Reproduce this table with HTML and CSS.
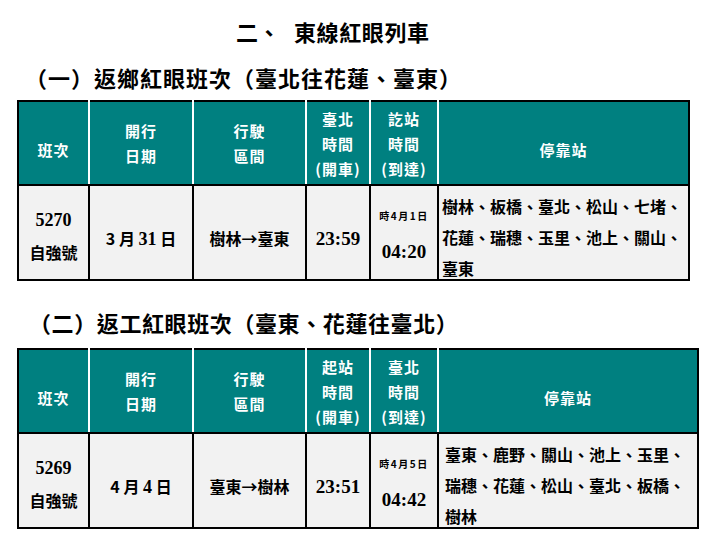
FILE: index.html
```html
<!DOCTYPE html>
<html lang="zh-Hant">
<head>
<meta charset="utf-8">
<link rel="stylesheet" href="styles.css">
</head>
<body>
<div class="page">
  <h1 class="title"><span>二、</span><span class="title-main">東線紅眼列車</span></h1>

  <h2 class="section">（一）返鄉紅眼班次（臺北往花蓮、臺東）</h2>
  <table class="sched sched-a">
    <colgroup>
      <col class="c1"><col class="c2"><col class="c3"><col class="c4"><col class="c5"><col class="c6">
    </colgroup>
    <thead>
      <tr>
        <th class="single">班次</th>
        <th>開行<br>日期</th>
        <th>行駛<br>區間</th>
        <th>臺北<br>時間<br>(開車)</th>
        <th>訖站<br>時間<br>(到達)</th>
        <th class="single">停靠站</th>
      </tr>
    </thead>
    <tbody>
      <tr>
        <td class="train"><span class="num">5270</span><br>自強號</td>
        <td class="date">3 月 <span class="num">31</span> 日</td>
        <td class="date">樹林→臺東</td>
        <td class="date"><span class="num time">23:59</span></td>
        <td class="arr"><span class="small">時4月1日</span><br><span class="num time">04:20</span></td>
        <td class="stops"><div class="stops-text">樹林、板橋、臺北、松山、七堵、花蓮、瑞穗、玉里、池上、關山、臺東</div></td>
      </tr>
    </tbody>
  </table>

  <h2 class="section section-b">（二）返工紅眼班次（臺東、花蓮往臺北）</h2>
  <table class="sched sched-b">
    <colgroup>
      <col class="c1"><col class="c2"><col class="c3"><col class="c4"><col class="c5"><col class="c6b">
    </colgroup>
    <thead>
      <tr>
        <th class="single">班次</th>
        <th>開行<br>日期</th>
        <th>行駛<br>區間</th>
        <th>起站<br>時間<br>(開車)</th>
        <th>臺北<br>時間<br>(到達)</th>
        <th class="single">停靠站</th>
      </tr>
    </thead>
    <tbody>
      <tr>
        <td class="train"><span class="num">5269</span><br>自強號</td>
        <td class="date">4 月 <span class="num">4</span> 日</td>
        <td class="date">臺東→樹林</td>
        <td class="date"><span class="num time">23:51</span></td>
        <td class="arr"><span class="small">時4月5日</span><br><span class="num time">04:42</span></td>
        <td class="stops stops-b"><div class="stops-text">臺東、鹿野、關山、池上、玉里、瑞穗、花蓮、松山、臺北、板橋、樹林</div></td>
      </tr>
    </tbody>
  </table>
</div>
</body>
</html>
```

FILE: styles.css
```css
html, body {
  margin: 0;
  padding: 0;
  background: #ffffff;
}

.page {
  width: 705px;
  height: 547px;
  padding-left: 17px;
  box-sizing: border-box;
  font-family: "Noto Sans CJK TC", "Noto Sans CJK SC", sans-serif;
  color: #000;
  overflow: hidden;
}

.title {
  margin: 0;
  padding: 17px 0 0 219px;
  height: 28px;
  font-size: 22px;
  line-height: 28px;
  font-weight: 700;
  display: flex;
  gap: 14px;
}

.title-main {
  letter-spacing: 0.6px;
}

.section {
  margin: 0;
  padding: 18px 0 9px 8px;
  font-size: 22px;
  line-height: 28px;
  font-weight: 700;
  letter-spacing: 1px;
}

.section-b {
  padding-top: 27px;
  padding-bottom: 12px;
  padding-left: 12px;
  letter-spacing: 0.6px;
}

.sched {
  border-collapse: collapse;
  table-layout: fixed;
  border: 2px solid #000;
}

.sched-a { width: 671px; }
.sched-b { width: 680px; }

.c1 { width: 71px; }
.c2 { width: 104px; }
.c3 { width: 113px; }
.c4 { width: 64px; }
.c5 { width: 68px; }
.c6 { width: 251px; }
.c6b { width: 260px; }

.sched th {
  background: #008080;
  color: #ffffff;
  font-size: 15px;
  font-weight: 700;
  line-height: 25px;
  height: 82px;
  padding: 0;
  text-align: center;
  vertical-align: middle;
  border-left: 2px solid #ffffff;
  border-bottom: 2px solid #000;
  letter-spacing: 1px;
}

.sched th.single {
  padding-top: 12px;
  height: 70px;
}

.sched th:first-child {
  border-left: 2px solid #000;
}

.sched td {
  background: #f2f2f2;
  font-size: 16px;
  font-weight: 700;
  line-height: 32px;
  height: 87px;
  padding: 6px 0 0 0;
  text-align: center;
  vertical-align: middle;
  border-left: 2px solid #000;
}

.sched td.date {
  padding-top: 11px;
  height: 82px;
}

.sched .num {
  font-family: "Liberation Serif", "Times New Roman", serif;
  font-weight: 700;
  font-size: 18px;
}

.sched .time {
  font-size: 19px;
}

.small {
  font-size: 10px;
  letter-spacing: 1.5px;
  display: inline-block;
  line-height: 26px;
  vertical-align: top;
}

.sched td.stops {
  text-align: left;
  vertical-align: top;
  padding: 5px 0 0 3px;
  height: 88px;
}

.stops-text {
  height: 88px;
  line-height: 31px;
}

.sched td.stops-b {
  padding-left: 6px;
}
```
